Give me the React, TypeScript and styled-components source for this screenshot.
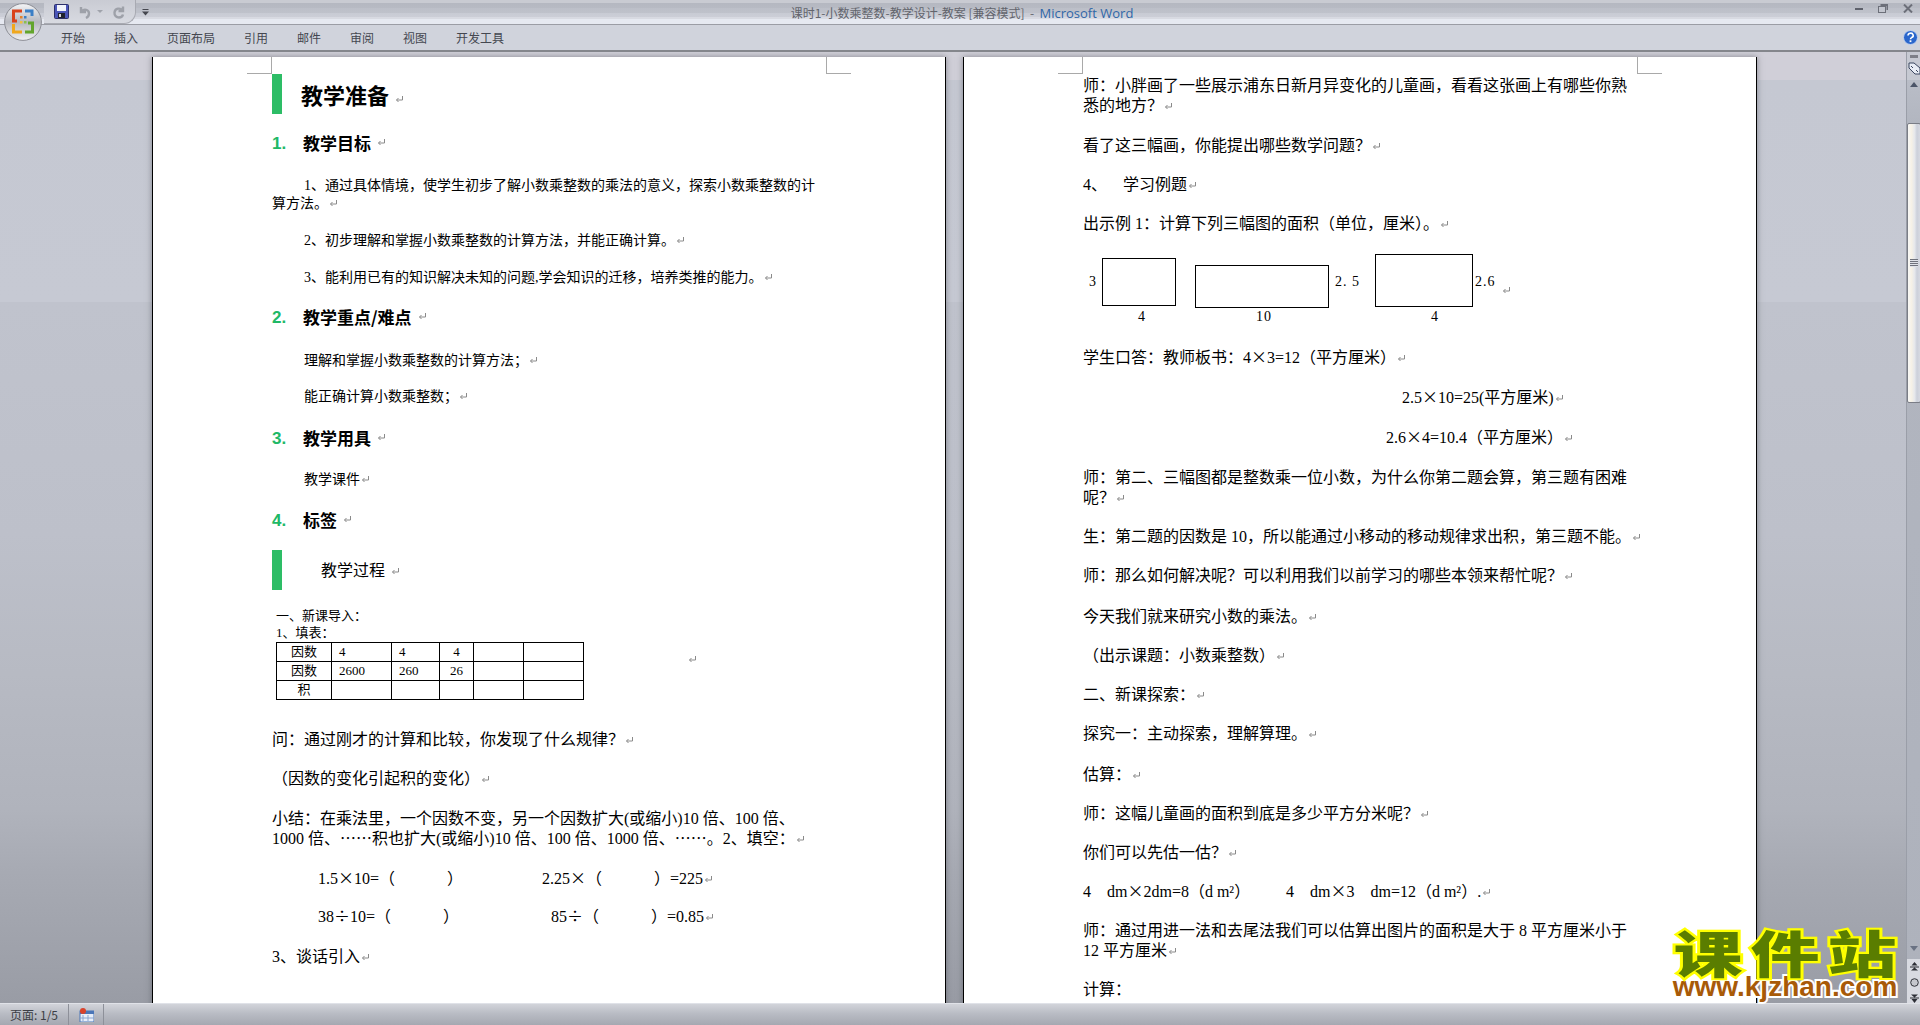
import React from 'react';
import styled, { createGlobalStyle } from 'styled-components';

const GlobalStyle = createGlobalStyle`
  html, body {
    margin: 0;
    padding: 0;
    overflow: hidden;
    background: #c5c8d2;
  }
`;

const TABS = ['开始', '插入', '页面布局', '引用', '邮件', '审阅', '视图', '开发工具'];

const TABLE_ROWS = [
  ['因数', '4', '4', '4', '', ''],
  ['因数', '2600', '260', '26', '', ''],
  ['积', '', '', '', '', ''],
];
const COL_WIDTHS = [55, 60, 48, 34, 50, 60];

function Mark() {
  return (
    <MarkIcon viewBox="0 0 9 9">
      <path d="M7.5 1v4H1.5M3.5 3 1.5 5l2 2" />
    </MarkIcon>
  );
}

function App() {
  return (
    <Window>
      <GlobalStyle />
      <TitleBar>
        <QuickAccess>
          <svg width="15" height="15" viewBox="0 0 15 15">
            <rect x="0.5" y="0.5" width="14" height="14" rx="1" fill="#4a55b8" stroke="#2c2f6a" />
            <rect x="3" y="1" width="9" height="6" fill="#f2f4fb" />
            <rect x="4" y="9" width="7" height="5" fill="#20222e" />
            <rect x="5" y="10" width="2" height="3" fill="#d8d8e0" />
          </svg>
          <svg width="14" height="14" viewBox="0 0 14 14" fill="none" stroke="#9ea1a9" strokeWidth="2.4">
            <path d="M3 2v5h5" />
            <path d="M3.5 6.5C6 3.5 11 4.5 11 8.5c0 2-1 3.5-3 4.5" />
          </svg>
          <DropCaret />
          <svg width="14" height="14" viewBox="0 0 14 14" fill="none" stroke="#9ea1a9" strokeWidth="2.4">
            <path d="M11 1.5v4.5H6.5" />
            <path d="M10.5 5.5C8.5 2.5 3 3 2.5 7.5c-.3 3 2 5 4.5 5 2 0 3.5-1 4-3" />
          </svg>
        </QuickAccess>
        <QatMenu>
          <svg width="7" height="7" viewBox="0 0 7 7" fill="#45474f">
            <rect x="0.5" y="0" width="6" height="1" />
            <path d="M0 2.5h7L3.5 6.5z" />
          </svg>
        </QatMenu>
        <WindowTitle>
          课时1-小数乘整数-教学设计-教案 [兼容模式]  -  <AppName>Microsoft Word</AppName>
        </WindowTitle>
        <WindowControls>
          <svg width="8" height="3" viewBox="0 0 8 3">
            <rect width="8" height="2" y="1" fill="#5f626c" />
          </svg>
          <svg width="10" height="9" viewBox="0 0 10 9" fill="none" stroke="#6c6f79">
            <rect x="0.5" y="2.5" width="7" height="6" fill="#c3c6cf" />
            <path d="M2.5 1h7v5" strokeWidth="2" />
          </svg>
          <svg width="10" height="9" viewBox="0 0 10 9" stroke="#6c6f79" strokeWidth="2">
            <path d="M1 0.5 9 8.5M9 0.5 1 8.5" />
          </svg>
        </WindowControls>
      </TitleBar>

      <Ribbon>
        <TabList>
          {TABS.map((tab) => (
            <Tab key={tab}>{tab}</Tab>
          ))}
        </TabList>
        <svg width="15" height="15" viewBox="0 0 15 15">
          <circle cx="7.5" cy="7.5" r="7" fill="#2a66cc" stroke="#c6d4ee" />
          <path d="M5 5.5a2.6 2.3 0 1 1 3.6 2.1c-.8.4-1.1.9-1.1 1.6" fill="none" stroke="#fff" strokeWidth="1.6" />
          <rect x="6.6" y="10.3" width="1.8" height="1.8" fill="#fff" />
        </svg>
      </Ribbon>

      <OfficeButton>
        <svg width="38" height="38" viewBox="0 0 38 38">
          <defs>
            <linearGradient id="ring" x1="0" y1="0" x2="0" y2="1">
              <stop offset="0" stopColor="#f4f5f7" />
              <stop offset="0.5" stopColor="#b6b8bf" />
              <stop offset="1" stopColor="#f1f1f3" />
            </linearGradient>
          </defs>
          <circle cx="19" cy="19" r="18.4" fill="url(#ring)" stroke="#8c8e96" />
          <g fill="none" strokeWidth="3">
            <path d="M18 8H9.5v10H13" stroke="#d8431c" />
            <path d="M21 8h7v5" stroke="#3a7fc6" />
            <path d="M9.5 21v8H18" stroke="#f0a81e" />
            <path d="M21 29h7.5v-9H24" stroke="#63a52c" />
          </g>
          <g fill="#3a7fc6">
            <rect x="16" y="13" width="2.5" height="2.5" fill="#e5822a" />
            <rect x="20" y="13" width="2.5" height="2.5" />
            <rect x="16" y="18" width="2.5" height="2.5" fill="#f0c040" />
            <rect x="20" y="18" width="2.5" height="2.5" fill="#8cc14c" />
          </g>
        </svg>
      </OfficeButton>

      <DocArea>
        <Page>
          <CropMark />
          <CropMark $right />
          <BarHeading $gap={19}>
            <Bar />
            <MainTitle>
              教学准备
              <Mark />
            </MainTitle>
          </BarHeading>
          <NumberedTitle $gap={19}>
            <Num>1.</Num>
            教学目标
            <Mark />
          </NumberedTitle>
          <Para $gap={24} $size={14} $lh={18}>
            <Indent />
            1、通过具体情境，使学生初步了解小数乘整数的乘法的意义，探索小数乘整数的计
            <br />
            算方法。
            <Mark />
          </Para>
          <Para $gap={19} $size={14} $lh={18} $indent={32}>
            2、初步理解和掌握小数乘整数的计算方法，并能正确计算。
            <Mark />
          </Para>
          <Para $gap={19} $size={14} $lh={18} $indent={32}>
            3、能利用已有的知识解决未知的问题,学会知识的迁移，培养类推的能力。
            <Mark />
          </Para>
          <NumberedTitle $gap={20}>
            <Num>2.</Num>
            教学重点/难点
            <Mark />
          </NumberedTitle>
          <Para $gap={25} $size={14} $lh={18} $indent={32}>
            理解和掌握小数乘整数的计算方法；
            <Mark />
          </Para>
          <Para $gap={18} $size={14} $lh={18} $indent={32}>
            能正确计算小数乘整数；
            <Mark />
          </Para>
          <NumberedTitle $gap={22}>
            <Num>3.</Num>
            教学用具
            <Mark />
          </NumberedTitle>
          <Para $gap={23} $size={14} $lh={18} $indent={32}>
            教学课件
            <Mark />
          </Para>
          <NumberedTitle $gap={21}>
            <Num>4.</Num>
            标签
            <Mark />
          </NumberedTitle>
          <BarHeading $gap={39} $top={20}>
            <Bar />
            <SubTitle>
              教学过程
              <Mark />
            </SubTitle>
          </BarHeading>
          <Para $gap={17} $size={13} $lh={17} $indent={4}>
            一、新课导入：
            <br />
            1、填表：
          </Para>
          <TableRow>
            <FillTable>
              <colgroup>
                {COL_WIDTHS.map((w, i) => (
                  <col key={i} width={w} />
                ))}
              </colgroup>
              <tbody>
                {TABLE_ROWS.map((row, r) => (
                  <tr key={r}>
                    {row.map((cell, c) => (
                      <FillCell key={c} $center={c === 0 || c === 3}>
                        {cell}
                      </FillCell>
                    ))}
                  </tr>
                ))}
              </tbody>
            </FillTable>
            <Mark />
          </TableRow>
          <Para $gap={30}>
            问：通过刚才的计算和比较，你发现了什么规律？
            <Mark />
          </Para>
          <Para $gap={19}>
            （因数的变化引起积的变化）
            <Mark />
          </Para>
          <Para $gap={20}>
            小结：在乘法里，一个因数不变，另一个因数扩大(或缩小)10 倍、100 倍、
            <br />
            1000 倍、<Cn>……</Cn>积也扩大(或缩小)10 倍、100 倍、1000 倍、<Cn>……</Cn>。2、填空：
            <Mark />
          </Para>
          <MathRow $gap={20} $indent={46}>
            <MathCell $width={224}>
              1.5<Times>×</Times>10=（　　　 ）
            </MathCell>
            <span>
              2.25<Times>×</Times>（　　　 ）=225
              <Mark />
            </span>
          </MathRow>
          <MathRow $gap={18} $indent={46}>
            <MathCell $width={233}>
              38<Times>÷</Times>10=（　　　 ）
            </MathCell>
            <span>
              85<Times>÷</Times>（　　　 ）=0.85
              <Mark />
            </span>
          </MathRow>
          <Para $gap={20}>
            3、谈话引入
            <Mark />
          </Para>
        </Page>

        <Page>
          <CropMark />
          <CropMark $right />
          <Para $gap={19}>
            师：小胖画了一些展示浦东日新月异变化的儿童画，看看这张画上有哪些你熟
            <br />
            悉的地方？
            <Mark />
          </Para>
          <Para $gap={19.5}>
            看了这三幅画，你能提出哪些数学问题？
            <Mark />
          </Para>
          <Para $gap={19}>
            4、　  学习例题
            <Mark />
          </Para>
          <Para $gap={19}>
            出示例 1：计算下列三幅图的面积（单位，厘米）。
            <Mark />
          </Para>
          <Figure width="440" height="75" viewBox="0 0 440 75">
            <g fill="none" stroke="#000" strokeWidth="1">
              <rect x="19.5" y="8.5" width="73" height="47" />
              <rect x="112.5" y="15.5" width="133" height="42" />
              <rect x="292.5" y="4.5" width="97" height="52" />
            </g>
            <FigureLabel x="6" y="36">3</FigureLabel>
            <FigureLabel x="59" y="71" textAnchor="middle">4</FigureLabel>
            <FigureLabel x="181" y="71" textAnchor="middle">10</FigureLabel>
            <FigureLabel x="252" y="36">2. 5</FigureLabel>
            <FigureLabel x="392" y="36">2.6</FigureLabel>
            <FigureLabel x="352" y="71" textAnchor="middle">4</FigureLabel>
            <path d="M426.5 37v4H420.5M422.5 39l-2 2 2 2" fill="none" stroke="#8a8a8a" />
          </Figure>
          <Para $gap={23.5}>
            学生口答：教师板书：4<Times>×</Times>3=12（平方厘米）
            <Mark />
          </Para>
          <Para $gap={19.5} $indent={319}>
            2.5<Times>×</Times>10=25(平方厘米)
            <Mark />
          </Para>
          <Para $gap={20} $indent={303}>
            2.6<Times>×</Times>4=10.4（平方厘米）
            <Mark />
          </Para>
          <Para $gap={20.5}>
            师：第二、三幅图都是整数乘一位小数，为什么你第二题会算，第三题有困难
            <br />
            呢？
            <Mark />
          </Para>
          <Para $gap={18.5}>
            生：第二题的因数是 10，所以能通过小移动的移动规律求出积，第三题不能。
            <Mark />
          </Para>
          <Para $gap={19.5}>
            师：那么如何解决呢？可以利用我们以前学习的哪些本领来帮忙呢？
            <Mark />
          </Para>
          <Para $gap={20.5}>
            今天我们就来研究小数的乘法。
            <Mark />
          </Para>
          <Para $gap={19}>
            （出示课题：小数乘整数）
            <Mark />
          </Para>
          <Para $gap={19}>
            二、新课探索：
            <Mark />
          </Para>
          <Para $gap={19.5}>
            探究一：主动探索，理解算理。
            <Mark />
          </Para>
          <Para $gap={20.5}>
            估算：
            <Mark />
          </Para>
          <Para $gap={19}>
            师：这幅儿童画的面积到底是多少平方分米呢？
            <Mark />
          </Para>
          <Para $gap={19}>
            你们可以先估一估？
            <Mark />
          </Para>
          <MathRow $gap={19} $indent={0}>
            <MathCell $width={203}>
              4　dm<Times>×</Times>2dm=8（d m²）
            </MathCell>
            <span>
              4　dm<Times>×</Times>3　dm=12（d m²）.
              <Mark />
            </span>
          </MathRow>
          <Para $gap={19}>
            师：通过用进一法和去尾法我们可以估算出图片的面积是大于 8 平方厘米小于
            <br />
            12 平方厘米
            <Mark />
          </Para>
          <Para $gap={19.5}>计算：</Para>
        </Page>

        <ScrollBar>
          <ScrollTop>
            <RulerDash />
            <RulerToggle>
              <svg width="13" height="13" viewBox="0 0 13 13" fill="#e9edf5" stroke="#3b4660">
                <path d="M1 1h5l6 5v6H7L1 6z" />
                <path d="M3 4l2 2M8 8l2 2" />
              </svg>
            </RulerToggle>
            <ArrowUp />
          </ScrollTop>
          <Thumb>
            <Grip />
          </Thumb>
          <ScrollBottom>
            <ArrowDown />
            <BrowseButtons>
              <svg width="9" height="9" viewBox="0 0 9 9" fill="#2c2e36">
                <path d="M4.5 0 7.5 3.5h-6zM0 4.5h9v1H0zM4.5 5.5 8 8.5H1z" />
              </svg>
              <svg width="9" height="9" viewBox="0 0 9 9">
                <circle cx="4.5" cy="4.5" r="3.8" fill="#c5c7cd" stroke="#33353c" />
              </svg>
              <svg width="9" height="9" viewBox="0 0 9 9" fill="#2c2e36">
                <path d="M1 .5h7L4.5 3.5zM0 3.5h9v1H0zM1.5 5h6L4.5 9z" />
              </svg>
            </BrowseButtons>
          </ScrollBottom>
        </ScrollBar>
      </DocArea>

      <StatusBar>
        <StatusCell $width={68}>页面: 1/5</StatusCell>
        <StatusCell $width={34}>
          <svg width="15" height="14" viewBox="0 0 15 14">
            <rect x="1" y="3" width="14" height="11" fill="#e6eefa" stroke="#4a76b8" />
            <rect x="1" y="3" width="14" height="3" fill="#4a76b8" />
            <path d="M4 7v6M9 7v6M1 10h14" stroke="#8aa6d0" />
            <circle cx="4" cy="3" r="3" fill="#d8432c" />
          </svg>
        </StatusCell>
      </StatusBar>

      <Watermark>
        <WatermarkTitle>课件站</WatermarkTitle>
        <WatermarkUrl>www.kjzhan.com</WatermarkUrl>
      </Watermark>
    </Window>
  );
}

export default App;

const CJK = `"Noto Sans CJK SC", sans-serif`;
const BODY = `"Liberation Serif", "Noto Sans CJK SC", sans-serif`;

const Window = styled.div`
  position: relative;
  display: flex;
  flex-direction: column;
  width: 1920px;
  height: 1025px;
  overflow: hidden;
  font-family: ${CJK};
  color: #000;
`;

const TitleBar = styled.div`
  position: relative;
  display: flex;
  align-items: center;
  flex: 0 0 25px;
  box-sizing: border-box;
  padding-left: 44px;
  border-bottom: 1px solid #9b9da5;
  background: linear-gradient(
    #c9cbd2 0,
    #c9cbd2 3px,
    #b5b8c1 3px,
    #b7bac3 8px,
    #bcbfc8 8px,
    #bfc2cb 13px,
    #c8cbd4 13px,
    #ccced7 17px,
    #d8dae2 17px,
    #d8dae2 19px,
    #e6e9f1 19px,
    #e6e9f1 24px
  );
`;

const QuickAccess = styled.div`
  display: flex;
  align-items: center;
  gap: 9px;
  width: 92px;
  height: 24px;
  box-sizing: border-box;
  padding-left: 10px;
  border: 1px solid #a8aab2;
  border-top: 0;
  border-left: 0;
  border-radius: 0 0 12px 0;
  background: linear-gradient(#c9cbd3, #d8dae1);
`;

const DropCaret = styled.span`
  width: 0;
  height: 0;
  margin: 0 0 0 -4px;
  border: 3px solid transparent;
  border-top: 3px solid #a0a3ab;
  border-bottom: 0;
`;

const QatMenu = styled.div`
  display: flex;
  margin-left: 6px;
`;

const WindowTitle = styled.div`
  position: absolute;
  left: 0;
  right: 0;
  top: 4px;
  padding-left: 4px;
  text-align: center;
  font-size: 12px;
  line-height: 17px;
  color: #62646c;
  white-space: pre;
`;

const AppName = styled.span`
  color: #2f67a8;
  font-family: "Open Sans", sans-serif;
  font-size: 13px;
`;

const WindowControls = styled.div`
  position: absolute;
  right: 7px;
  top: 4px;
  display: flex;
  align-items: center;
  gap: 15px;
`;

const Ribbon = styled.div`
  display: flex;
  align-items: center;
  justify-content: space-between;
  flex: 0 0 27px;
  box-sizing: border-box;
  padding: 0 2px 0 61px;
  border-bottom: 2px solid #84868c;
  background: #d0d3dc;
`;

const TabList = styled.div`
  display: flex;
  gap: 29px;
`;

const Tab = styled.span`
  font-size: 12px;
  line-height: 16px;
  color: #444750;
`;

const OfficeButton = styled.div`
  position: absolute;
  left: 4px;
  top: 3px;
  width: 38px;
  height: 38px;
`;

const DocArea = styled.div`
  display: flex;
  flex: 1;
  min-height: 0;
  gap: 17px;
  box-sizing: border-box;
  padding: 5px 0 0 152px;
  overflow: hidden;
  background: linear-gradient(
    #d0cfd8 0,
    #d0cfd8 28px,
    #c5c8d2 28px,
    #c6c9d3 250px,
    #c0c3cd 250px,
    #bdc0ca 483px,
    #b7bac3 621px,
    #b0b3bc 758px,
    #a7aab3 820px,
    #9da0a9 915px,
    #999ca5 100%
  );
`;

const Page = styled.div`
  position: relative;
  flex: 0 0 794px;
  box-sizing: border-box;
  height: 1100px;
  padding-left: 119px;
  border-left: 1px solid #000;
  border-right: 1px solid #000;
  background: #fff;
  box-shadow: 0 0 6px rgba(60, 62, 70, 0.5);
  font-family: ${BODY};
`;

const CropMark = styled.span<{ $right?: boolean }>`
  position: absolute;
  top: 0;
  ${(props) => (props.$right ? 'left: 673px;' : 'left: 94px;')}
  width: 24px;
  height: 16px;
  border-bottom: 1px solid #a9a9a9;
  ${(props) =>
    props.$right
      ? 'border-left: 1px solid #a9a9a9;'
      : 'border-right: 1px solid #a9a9a9;'}
`;

const MarkIcon = styled.svg`
  width: 9px;
  height: 9px;
  margin-left: 1px;
  fill: none;
  stroke: #8a8a8a;
  stroke-width: 1;
`;

const BarHeading = styled.div<{ $gap: number; $top?: number }>`
  display: flex;
  align-items: center;
  gap: ${(props) => props.$gap}px;
  height: 40px;
  margin-top: ${(props) => props.$top ?? 0}px;
  &:first-of-type {
    margin-top: 17px;
  }
  ${MarkIcon} {
    margin-left: 6px;
  }
`;

const Bar = styled.span`
  flex: 0 0 10px;
  height: 40px;
  background: #2dbd66;
`;

const MainTitle = styled.div`
  font-family: ${CJK};
  font-size: 22px;
  font-weight: 700;
  line-height: 28px;
`;

const SubTitle = styled.div`
  margin-top: -2px;
  font-family: ${CJK};
  font-size: 16px;
  line-height: 20px;
`;

const NumberedTitle = styled.div<{ $gap: number }>`
  display: flex;
  align-items: center;
  box-sizing: border-box;
  height: 20px;
  padding-bottom: 2px;
  margin-top: ${(props) => props.$gap}px;
  font-family: ${CJK};
  font-size: 17px;
  font-weight: 700;
  ${MarkIcon} {
    margin-left: 6px;
  }
`;

const Num = styled.span`
  flex: 0 0 31px;
  margin-top: 4px;
  font-family: "Liberation Sans", sans-serif;
  font-size: 17px;
  color: #20b866;
`;

const Para = styled.p<{ $gap: number; $size?: number; $lh?: number; $indent?: number }>`
  margin: ${(props) => props.$gap}px 0 0;
  padding-left: ${(props) => props.$indent ?? 0}px;
  font-size: ${(props) => props.$size ?? 16}px;
  line-height: ${(props) => props.$lh ?? 20}px;
  white-space: pre;
`;

const Indent = styled.span`
  display: inline-block;
  width: 32px;
`;

const Times = styled.span`
  display: inline-block;
  width: 1em;
  text-align: center;
  font-family: ${CJK};
  line-height: 1;
`;

const Cn = styled.span`
  font-family: ${CJK};
  line-height: 0;
`;

const TableRow = styled.div`
  display: flex;
  align-items: flex-start;
  gap: 103px;
  padding: 0 0 0 4px;
  margin-top: 0.5px;

  > svg {
    margin-top: 13px;
  }
`;

const FillTable = styled.table`
  width: 307px;
  table-layout: fixed;
  border-collapse: collapse;
  font-size: 13px;
  line-height: 18px;
`;

const FillCell = styled.td<{ $center?: boolean }>`
  height: 18px;
  padding: 0 0 0 7px;
  border: 1px solid #000;
  text-align: ${(props) => (props.$center ? 'center' : 'left')};
  ${(props) => props.$center && 'padding: 0;'}
`;

const MathRow = styled.div<{ $gap: number; $indent: number }>`
  display: flex;
  margin-top: ${(props) => props.$gap}px;
  padding-left: ${(props) => props.$indent}px;
  font-size: 16px;
  line-height: 20px;
  white-space: pre;
`;

const MathCell = styled.span<{ $width: number }>`
  flex: 0 0 ${(props) => props.$width}px;
`;

const Figure = styled.svg`
  display: block;
  margin-top: 16px;
`;

const FigureLabel = styled.text`
  font-family: "Liberation Serif", serif;
  font-size: 14px;
  letter-spacing: 1px;
  fill: #000;
`;

const ScrollBar = styled.div`
  position: relative;
  display: flex;
  flex-direction: column;
  flex: 0 0 14px;
  box-sizing: border-box;
  height: 951px;
  margin: -5px 0 0 132px;
  background: linear-gradient(#b2b6c0, #aeb2bc);
  border-left: 1px solid #9a9ea8;
`;

const ScrollTop = styled.div`
  display: flex;
  flex-direction: column;
  align-items: center;
  height: 71px;
  background: linear-gradient(#c6c9d2 0, #c6c9d2 28px, #b9bdc7 28px, #b2b6c0 100%);
`;

const RulerDash = styled.span`
  width: 8px;
  height: 3px;
  margin-top: 3px;
  background: #7d7f88;
`;

const RulerToggle = styled.span`
  display: flex;
  justify-content: center;
  align-items: center;
  width: 14px;
  height: 17px;
  margin-top: 2px;
`;

const ArrowUp = styled.span`
  width: 0;
  height: 0;
  margin-top: 5px;
  border: 4px solid transparent;
  border-top: 0;
  border-bottom: 5px solid #4c5568;
`;

const Thumb = styled.div`
  display: flex;
  align-items: center;
  justify-content: center;
  height: 280px;
  box-sizing: border-box;
  border: 1px solid #7a7d86;
  border-radius: 2px;
  background: linear-gradient(90deg, #f8f8f6, #f6f1e6 30%, #e6e8ec 55%, #ccd0da 75%, #d6d9e1);
`;

const Grip = styled.span`
  width: 8px;
  height: 8px;
  background: repeating-linear-gradient(#6f727c 0 1px, #dfe2e8 1px 2px);
`;

const ScrollBottom = styled.div`
  display: flex;
  flex-direction: column;
  align-items: center;
  margin-top: auto;
`;

const ArrowDown = styled.span`
  width: 0;
  height: 0;
  margin-bottom: 8px;
  border: 4px solid transparent;
  border-bottom: 0;
  border-top: 5px solid #6a7283;
`;

const BrowseButtons = styled.div`
  display: flex;
  flex-direction: column;
  align-items: center;
  gap: 7px;
  box-sizing: border-box;
  width: 100%;
  height: 44px;
  padding-top: 3px;
  background: #d8dae1;
`;

const StatusBar = styled.div`
  display: flex;
  flex: 0 0 22px;
  box-sizing: border-box;
  border-top: 1px solid #e0e2e8;
  background: linear-gradient(#d2d4da, #b9bcc4 45%, #a5a8b1);
`;

const StatusCell = styled.div<{ $width: number }>`
  display: flex;
  align-items: center;
  justify-content: center;
  width: ${(props) => props.$width}px;
  border-right: 1px solid #8d9099;
  font-size: 12px;
  color: #3c3e45;
`;

const Watermark = styled.div`
  position: absolute;
  left: 1672px;
  top: 928px;
  width: 226px;
  text-align: center;
  white-space: nowrap;
`;

const WatermarkTitle = styled.div`
  font-family: ${CJK};
  font-size: 69px;
  font-weight: 900;
  line-height: 46px;
  letter-spacing: 8px;
  margin-right: -8px;
  color: #5a7d00;
  -webkit-text-stroke: 6px #ffff00;
  paint-order: stroke fill;
  transform: scaleY(0.72);
`;

const WatermarkUrl = styled.div`
  font-family: "Liberation Sans", sans-serif;
  font-size: 28px;
  font-weight: 700;
  line-height: 26px;
  color: #a85a08;
  -webkit-text-stroke: 4px #fff;
  paint-order: stroke fill;
`;
